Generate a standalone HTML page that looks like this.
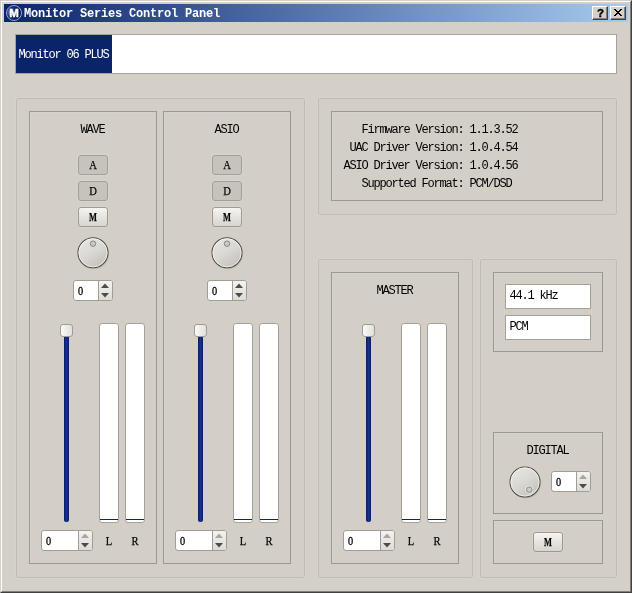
<!DOCTYPE html><html><head><meta charset="utf-8"><title>Monitor Series Control Panel</title><style>
*{box-sizing:border-box;margin:0;padding:0}
html,body{width:632px;height:593px;overflow:hidden;background:#d4d0c8}
body{position:relative;font:12px/14px "Liberation Mono",monospace;color:#000}
.a{position:absolute}
.t{position:absolute;font:12px/14px "Liberation Mono",monospace;letter-spacing:-1.2px;white-space:pre;color:#000;margin-left:-0.6px}
.z{position:absolute;font:12px/14px "Liberation Serif",serif;color:#000;transform:scaleX(.86);transform-origin:0 0;-webkit-text-stroke:.3px #000}
.s{position:absolute;font:12px/14px "Liberation Serif",serif;color:#000;width:12px;text-align:center;-webkit-text-stroke:.25px #000;transform:scaleX(.88)}
#w{position:absolute;left:0;top:0;width:632px;height:593px;will-change:transform}
.tb{position:absolute;font:bold 12px/14px "Liberation Mono",monospace;letter-spacing:-0.2px;white-space:pre;color:#fff}
.og{position:absolute;border:1px solid #c0bdb5;border-radius:2px;background:#d3cfc7;box-shadow:0 0 0 1px rgba(255,255,255,.08)}
.ig{position:absolute;border:1px solid #9b9890;background:#d3cfc7;box-shadow:inset 1px 1px 0 #d6d3cb}
.btn{position:absolute;width:30px;height:20px;border:1px solid #a29f97;border-radius:3px;background:#c6c3bb;box-shadow:0 0 0 1px rgba(255,255,255,.12)}
.btn.up{background:linear-gradient(#f6f5f2,#e6e4de 50%,#d9d6cf);border-color:#9c9991}
.btn span{position:absolute;left:0;right:0;top:2px;text-align:center;font:12px/14px "Liberation Serif",serif;color:#000;-webkit-text-stroke:.25px #000;transform:scaleX(.88)}
.btn.up span{font-weight:bold;transform:scaleX(.7)}
.dial{position:absolute;width:31px;height:31px;border-radius:50%;border:1px solid #5e5e5c;background:linear-gradient(150deg,#e5e3df 12%,#dcdad4 48%,#cbc8c1 88%);box-shadow:inset 0 0 0 1px rgba(250,250,248,.85),1px 1.5px 1.5px rgba(0,0,0,.16)}
.notch{position:absolute;width:6.6px;height:6.6px;border-radius:50%;border:1px solid #828280;background:#cac8c2}
.spin{position:absolute;height:21px;border:1px solid #a09d95;border-radius:3px;background:#fff;overflow:hidden}
.spin .sb{position:absolute;right:0;top:0;bottom:0;width:14px;border-left:1px solid #a09d95;background:linear-gradient(#f4f3f0,#dedbd4)}
.spin svg{position:absolute;left:0;top:0}
.handle{position:absolute;width:13px;height:13px;border:1px solid #a09d95;border-radius:3px;background:linear-gradient(90deg,#fbfaf9,#e2e0da)}
.groove{position:absolute;width:5px;border-radius:2px;background:linear-gradient(90deg,#0a1f5c,#16328a 50%,#0a1f5c)}
.meter{position:absolute;width:20px;height:200px;border:1px solid #a5a29a;border-radius:3px;background:#fff}
.meter i{position:absolute;left:0;right:0;bottom:2px;height:1px;background:#0a246a}
.field{position:absolute;width:86px;height:25px;border:1px solid #a5a29a;background:#fff}
</style></head><body><div id="w">
<div class="a" style="left:0;top:0;width:632px;height:593px;border-style:solid;border-width:1px;border-color:#d4d0c8 #404040 #404040 #d4d0c8"></div>
<div class="a" style="left:1px;top:1px;width:630px;height:591px;border-style:solid;border-width:1px;border-color:#fff #808080 #808080 #fff"></div>
<div class="a" style="left:4px;top:4px;width:624px;height:18px;background:linear-gradient(90deg,#0a246a,#a6caf0)"></div>
<svg class="a" style="left:5px;top:4px" width="18" height="18" viewBox="0 0 18 18"><defs><radialGradient id="ig" cx="0.3" cy="0.45" r="0.6"><stop offset="0" stop-color="#959dc2"/><stop offset="0.5" stop-color="#222e70"/><stop offset="1" stop-color="#0a1448"/></radialGradient></defs><circle cx="9" cy="9" r="7.5" fill="url(#ig)" stroke="#7cb0de" stroke-width="1"/><text x="9.1" y="13" text-anchor="middle" font-family="Liberation Sans, sans-serif" font-weight="bold" font-size="11.5" fill="#fff" stroke="#fff" stroke-width="0.4" textLength="9.6" lengthAdjust="spacingAndGlyphs">M</text></svg>
<div class="tb" style="left:24px;top:7px;letter-spacing:-0.2px">Monitor Series Control Panel</div>
<div class="a" style="left:592px;top:6px;width:16px;height:14px;background:#d4d0c8;border-style:solid;border-width:1px;border-color:#fff #404040 #404040 #fff"><div class="a" style="left:0;top:0;width:14px;height:12px;border-style:solid;border-width:0 1px 1px 0;border-color:#808080"></div><div class="a" style="left:1px;top:-1px;width:13px;text-align:center;-webkit-text-stroke:.4px #000;font:bold 11.5px/14px 'Liberation Sans',sans-serif;color:#000">?</div></div>
<div class="a" style="left:610px;top:6px;width:16px;height:14px;background:#d4d0c8;border-style:solid;border-width:1px;border-color:#fff #404040 #404040 #fff"><div class="a" style="left:0;top:0;width:14px;height:12px;border-style:solid;border-width:0 1px 1px 0;border-color:#808080"></div><svg class="a" style="left:3px;top:2px" width="8" height="7" viewBox="0 0 8 7"><path shape-rendering="crispEdges" d="M0 0h2v1h-2zM6 0h2v1h-2zM1 1h2v1h-2zM5 1h2v1h-2zM2 2h4v1h-4zM3 3h2v1h-2zM2 4h4v1h-4zM1 5h2v1h-2zM5 5h2v1h-2zM0 6h2v1h-2zM6 6h2v1h-2z" fill="#000"/></svg></div>
<div class="a" style="left:15px;top:34px;width:602px;height:40px;border:1px solid #a5a29a;background:#fff"></div>
<div class="a" style="left:16px;top:35px;width:96px;height:38px;background:#0a246a"></div>
<div class="t" style="left:19px;top:48px;color:#fff">Monitor 06 PLUS</div>
<div class="og" style="left:16px;top:98px;width:289px;height:480px"></div>
<div class="og" style="left:318px;top:98px;width:299px;height:117px"></div>
<div class="og" style="left:318px;top:259px;width:155px;height:319px"></div>
<div class="og" style="left:480px;top:259px;width:137px;height:319px"></div>
<div class="ig" style="left:29px;top:111px;width:128px;height:453px"></div>
<div class="ig" style="left:163px;top:111px;width:128px;height:453px"></div>
<div class="ig" style="left:331px;top:111px;width:272px;height:90px"></div>
<div class="ig" style="left:331px;top:272px;width:128px;height:292px"></div>
<div class="ig" style="left:493px;top:272px;width:110px;height:80px"></div>
<div class="ig" style="left:493px;top:432px;width:110px;height:82px"></div>
<div class="ig" style="left:493px;top:520px;width:110px;height:44px"></div>
<div class="t" style="left:81px;top:123px;">WAVE</div>
<div class="btn" style="left:78px;top:155px"><span>A</span></div>
<div class="btn" style="left:78px;top:181px"><span>D</span></div>
<div class="btn up" style="left:78px;top:207px"><span>M</span></div>
<svg class="a" style="left:73px;top:232px" width="40" height="40" viewBox="0 0 40 40"><defs><linearGradient id="dg1" x1="0.2" y1="0.05" x2="0.8" y2="0.95"><stop offset="0.1" stop-color="#e4e2dd"/><stop offset="0.5" stop-color="#d9d7d1"/><stop offset="0.9" stop-color="#c8c5be"/></linearGradient></defs><circle cx="20.80" cy="22.00" r="15.3" fill="rgba(0,0,0,.10)"/><circle cx="20.00" cy="20.80" r="15" fill="url(#dg1)" stroke="#4c4c4a" stroke-width="1.05"/><circle cx="20.00" cy="20.80" r="14.1" fill="none" stroke="#f6f6f4" stroke-opacity=".8" stroke-width="0.9"/><circle cx="20.00" cy="11.70" r="2.75" fill="#cac8c2" stroke="#82827f" stroke-width="0.9"/></svg>
<div class="spin" style="left:73px;top:280px;width:40px"><div class="sb"><svg width="13" height="19" viewBox="0 0 13 19"><path d="M6 2.6l4 4.4h-8z" fill="#4c4c4c"/><path d="M2 12h8l-4 4.4z" fill="#4c4c4c"/></svg></div></div>
<div class="z" style="left:78px;top:284px">0</div>
<div class="groove" style="left:64px;top:330px;height:192px"></div>
<div class="handle" style="left:60px;top:324px"></div>
<div class="meter" style="left:99px;top:323px"><i></i></div>
<div class="meter" style="left:125px;top:323px"><i></i></div>
<div class="spin" style="left:41px;top:530px;width:52px"><div class="sb"><svg width="13" height="19" viewBox="0 0 13 19"><path d="M6 2.6l4 4.4h-8z" fill="#a9a69f"/><path d="M2 12h8l-4 4.4z" fill="#4c4c4c"/></svg></div></div>
<div class="z" style="left:46px;top:534px">0</div>
<div class="s" style="left:103px;top:534px">L</div>
<div class="s" style="left:129px;top:534px">R</div>
<div class="t" style="left:215px;top:123px;">ASIO</div>
<div class="btn" style="left:212px;top:155px"><span>A</span></div>
<div class="btn" style="left:212px;top:181px"><span>D</span></div>
<div class="btn up" style="left:212px;top:207px"><span>M</span></div>
<svg class="a" style="left:207px;top:232px" width="40" height="40" viewBox="0 0 40 40"><defs><linearGradient id="dg2" x1="0.2" y1="0.05" x2="0.8" y2="0.95"><stop offset="0.1" stop-color="#e4e2dd"/><stop offset="0.5" stop-color="#d9d7d1"/><stop offset="0.9" stop-color="#c8c5be"/></linearGradient></defs><circle cx="20.80" cy="22.00" r="15.3" fill="rgba(0,0,0,.10)"/><circle cx="20.00" cy="20.80" r="15" fill="url(#dg2)" stroke="#4c4c4a" stroke-width="1.05"/><circle cx="20.00" cy="20.80" r="14.1" fill="none" stroke="#f6f6f4" stroke-opacity=".8" stroke-width="0.9"/><circle cx="20.00" cy="11.70" r="2.75" fill="#cac8c2" stroke="#82827f" stroke-width="0.9"/></svg>
<div class="spin" style="left:207px;top:280px;width:40px"><div class="sb"><svg width="13" height="19" viewBox="0 0 13 19"><path d="M6 2.6l4 4.4h-8z" fill="#4c4c4c"/><path d="M2 12h8l-4 4.4z" fill="#4c4c4c"/></svg></div></div>
<div class="z" style="left:212px;top:284px">0</div>
<div class="groove" style="left:198px;top:330px;height:192px"></div>
<div class="handle" style="left:194px;top:324px"></div>
<div class="meter" style="left:233px;top:323px"><i></i></div>
<div class="meter" style="left:259px;top:323px"><i></i></div>
<div class="spin" style="left:175px;top:530px;width:52px"><div class="sb"><svg width="13" height="19" viewBox="0 0 13 19"><path d="M6 2.6l4 4.4h-8z" fill="#a9a69f"/><path d="M2 12h8l-4 4.4z" fill="#4c4c4c"/></svg></div></div>
<div class="z" style="left:180px;top:534px">0</div>
<div class="s" style="left:237px;top:534px">L</div>
<div class="s" style="left:263px;top:534px">R</div>
<div class="t" style="left:377px;top:284px;">MASTER</div>
<div class="groove" style="left:366px;top:330px;height:192px"></div>
<div class="handle" style="left:362px;top:324px"></div>
<div class="meter" style="left:401px;top:323px"><i></i></div>
<div class="meter" style="left:427px;top:323px"><i></i></div>
<div class="spin" style="left:343px;top:530px;width:52px"><div class="sb"><svg width="13" height="19" viewBox="0 0 13 19"><path d="M6 2.6l4 4.4h-8z" fill="#a9a69f"/><path d="M2 12h8l-4 4.4z" fill="#4c4c4c"/></svg></div></div>
<div class="z" style="left:348px;top:534px">0</div>
<div class="s" style="left:405px;top:534px">L</div>
<div class="s" style="left:431px;top:534px">R</div>
<div class="t" style="left:362px;top:123px;">Firmware Version:</div>
<div class="t" style="left:470px;top:123px;">1.1.3.52</div>
<div class="t" style="left:350px;top:141px;">UAC Driver Version:</div>
<div class="t" style="left:470px;top:141px;">1.0.4.54</div>
<div class="t" style="left:344px;top:159px;">ASIO Driver Version:</div>
<div class="t" style="left:470px;top:159px;">1.0.4.56</div>
<div class="t" style="left:362px;top:177px;">Supported Format:</div>
<div class="t" style="left:470px;top:177px;">PCM/DSD</div>
<div class="field" style="left:505px;top:284px"></div>
<div class="field" style="left:505px;top:315px"></div>
<div class="t" style="left:510px;top:289px;">44.1 kHz</div>
<div class="t" style="left:510px;top:320px;">PCM</div>
<div class="t" style="left:527px;top:444px;">DIGITAL</div>
<svg class="a" style="left:505px;top:461px" width="40" height="40" viewBox="0 0 40 40"><defs><linearGradient id="dg3" x1="0.2" y1="0.05" x2="0.8" y2="0.95"><stop offset="0.1" stop-color="#e4e2dd"/><stop offset="0.5" stop-color="#d9d7d1"/><stop offset="0.9" stop-color="#c8c5be"/></linearGradient></defs><circle cx="20.80" cy="22.10" r="15.3" fill="rgba(0,0,0,.10)"/><circle cx="20.00" cy="20.90" r="15" fill="url(#dg3)" stroke="#4c4c4a" stroke-width="1.05"/><circle cx="20.00" cy="20.90" r="14.1" fill="none" stroke="#f6f6f4" stroke-opacity=".8" stroke-width="0.9"/><circle cx="24.30" cy="28.70" r="3.7" fill="none" stroke="#ecebe7" stroke-width="0.9"/><circle cx="24.30" cy="28.70" r="2.75" fill="#d0cdc7" stroke="#82827f" stroke-width="0.9"/></svg>
<div class="spin" style="left:551px;top:471px;width:40px"><div class="sb"><svg width="13" height="19" viewBox="0 0 13 19"><path d="M6 2.6l4 4.4h-8z" fill="#a9a69f"/><path d="M2 12h8l-4 4.4z" fill="#4c4c4c"/></svg></div></div>
<div class="z" style="left:556px;top:475px">0</div>
<div class="btn up" style="left:533px;top:532px"><span>M</span></div>
</div></body></html>
